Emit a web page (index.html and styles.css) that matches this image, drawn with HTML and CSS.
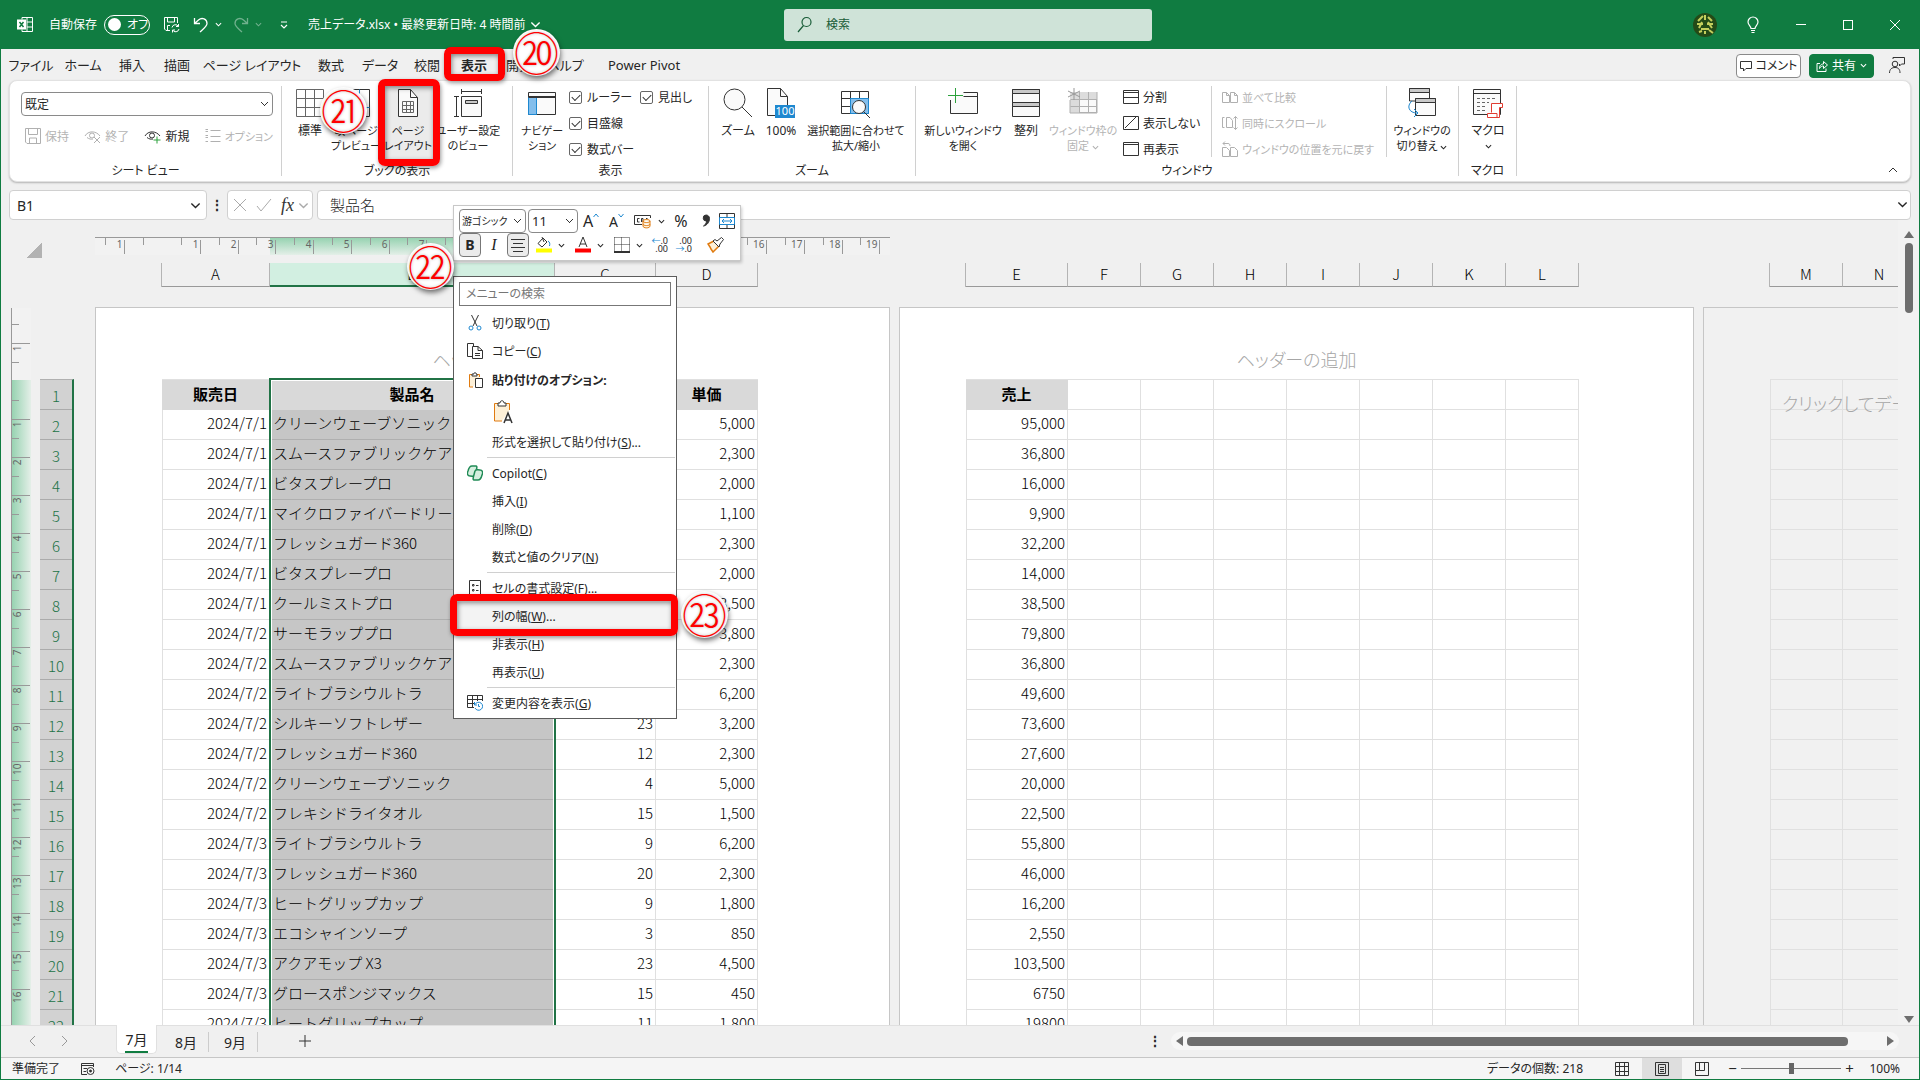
FILE: index.html
```html
<!DOCTYPE html>
<html lang="ja">
<head>
    <meta charset="UTF-8">
    <meta name="viewport" content="width=device-width, initial-scale=1.0">
    <title>売上データ.xlsx</title>
    <link rel="stylesheet" href="styles.css">
</head>
<body>
<div class="app">
    <header class="titlebar">
        <div class="title-left">
            <svg class="app-icon" width="17" height="17" viewBox="0 0 17 17"><path d="M5 3.500V1.500H15.500V15.500H5V13.500M10 1.500V15.500M10 6H15.500M10 11H15.500"/><rect x=".5" y="4" width="8" height="9" fill="#fff"/><path d="M2.500 6L6.500 11M6.500 6L2.500 11" stroke="#107c41" stroke-width="1.500"/></svg>
            <span class="autosave">自動保存</span>
            <button class="toggle"><i></i>オフ</button>
            <button class="tb-btn save"><svg width="17" height="17" viewBox="0 0 17 17"><path d="M7 14.500H3L1.500 13V1.500H14.500V7M4.500 1.500V6H11.500V1.500M4.500 14V9.500H7"/><path d="M9 11.500A3.500 3.500 0 0 1 15.500 10.500V8M15.500 10.500H13M16 13A3.500 3.500 0 0 1 9.500 14V16.500M9.500 14H12"/></svg></button>
            <button class="tb-btn undo"><svg width="16" height="16" viewBox="0 0 16 16" stroke-width="1.300"><path d="M1.500 1V6.500H7M1.500 6.500L5.500 3C9 0 14 2 14 6.500C14 9 12 10.500 7 15"/></svg><svg class="chev" viewBox="0 0 8 5"><path d="M1 1L4 4L7 1"/></svg></button>
            <button class="tb-btn redo"><svg width="16" height="16" viewBox="0 0 16 16" stroke-width="1.300"><path d="M14.500 1V6.500H9M14.500 6.500L10.500 3C7 0 2 2 2 6.500C2 9 4 10.500 9 15"/></svg><svg class="chev" viewBox="0 0 8 5"><path d="M1 1L4 4L7 1"/></svg></button>
            <button class="tb-btn qat"><svg width="8" height="8" viewBox="0 0 8 8" stroke-width="1.200"><path d="M1 1H7M1 4L4 7L7 4"/></svg></button>
            <span class="filename">売上データ.xlsx • 最終更新日時: 4 時間前</span>
            <svg class="chev wide" viewBox="0 0 8 5"><path d="M1 1L4 4L7 1"/></svg>
        </div>
        <label class="search">
            <svg width="16" height="18" viewBox="0 0 16 18" stroke-width="1.200"><circle cx="9.500" cy="6" r="4.500"/><path d="M6.500 9.500L1 16"/></svg>
            <input type="text" placeholder="検索" aria-label="検索">
        </label>
        <div class="title-right">
            <svg class="avatar" width="24" height="24" viewBox="0 0 24 24"><circle cx="12" cy="12" r="12" fill="#244a17" stroke="none"/><g stroke="#c4cf5d" stroke-width="2"><path d="M5 8L10 3M12 2V7M15 4L19 8M4 11H10M14 11H20M9 9L6 15M15 9L19 15M8 16H16M6 19L9 18M12 18V21M16 17L20 20"/></g></svg>
            <button class="tb-btn"><svg width="14" height="18" viewBox="0 0 14 18" stroke-width="1.200"><path d="M5 12.500C5 10 2 9 2 6A5 5 0 0 1 12 6C12 9 9 10 9 12.500ZM5 14.500H9M5.500 16.500H8.500"/></svg></button>
            <button class="tb-btn"><svg width="12" height="12" viewBox="0 0 12 12"><path d="M1 5.500H11"/></svg></button>
            <button class="tb-btn"><svg width="12" height="12" viewBox="0 0 12 12"><rect x="1.500" y="1.500" width="9" height="9"/></svg></button>
            <button class="tb-btn"><svg width="12" height="12" viewBox="0 0 12 12"><path d="M1 1L11 11M11 1L1 11"/></svg></button>
        </div>
    </header>

    <nav class="tabs">
        <a href="#" class="tab t50">ファイル</a>
        <a href="#" class="tab t54">ホーム</a>
        <a href="#" class="tab t44">挿入</a>
        <a href="#" class="tab">描画</a>
        <a href="#" class="tab t104">ページ レイアウト</a>
        <a href="#" class="tab t54">数式</a>
        <a href="#" class="tab t44">データ</a>
        <a href="#" class="tab t50">校閲</a>
        <a href="#" class="tab t44 active">表示</a>
        <a href="#" class="tab">開発</a>
        <a href="#" class="tab">ヘルプ</a>
        <a href="#" class="tab t112">Power Pivot</a>
        <div class="tab-actions">
            <button class="comment-btn"><svg width="12" height="12" viewBox="0 0 12 12"><path d="M.500 1.500H11.500V8.500H6L3.500 11V8.500H.500Z"/></svg>コメント</button>
            <button class="share-btn"><svg width="12" height="12" viewBox="0 0 12 12"><path d="M4 3.500H1V11.500H10V8.500M3.500 8.500C3.500 5 5.500 4 7.500 4V1.500L11.500 5L7.500 8.500V6C6 6 4.500 6.500 3.500 8.500Z"/></svg>共有<svg class="chev" viewBox="0 0 8 5"><path d="M1 1L4 4L7 1"/></svg></button>
            <svg class="person" width="17" height="17" viewBox="0 0 17 17"><circle cx="7" cy="7" r="2.800"/><path d="M1.500 16C1.500 12 4 10.500 7 10.500S12 12 12 16M5 2V.500H16.500V7H13.500L11.500 9V7"/></svg>
        </div>
    </nav>

    <section class="ribbon">
        <div class="group g-view">
            <div class="group-body">
                <select class="view-select" aria-label="シート ビュー"><option>既定</option></select>
                <div class="view-actions">
                    <button class="small off"><svg width="16" height="16" viewBox="0 0 16 16"><path d="M.500 .500H15.500V15.500H2L.500 14ZM3.500 .500V6.500H12.500V.500M4.500 15V10H11.500V15"/></svg>保持</button>
                    <button class="small off"><svg width="17" height="16" viewBox="0 0 17 16"><path d="M1 8C4 2.500 12 2.500 16 8M3 9.500C5 11 7 11.500 9 11"/><circle cx="8" cy="7.500" r="2.500"/><path d="M10 9L16 15M16 9L10 15"/></svg>終了</button>
                    <button class="small"><svg width="17" height="16" viewBox="0 0 17 16"><path d="M1 8C4 2.500 12 2.500 16 8M3 9.500C5 11 7 11.500 9 11"/><circle cx="8" cy="7.500" r="2.500"/><path class="green" d="M13 8.500V15.500M9.500 12H16.500"/></svg>新規</button>
                    <button class="small off options"><svg width="16" height="16" viewBox="0 0 16 16"><path d="M.500 1.500H3M.500 7.500H3M.500 13.500H3M5.500 2.500H15.500M5.500 8.500H15.500M5.500 13.500H15.500M.500 3.500H3M.500 9.500H3"/></svg>オプション</button>
                </div>
            </div>
            <div class="group-name">シート ビュー</div>
        </div>

        <div class="group g-book">
            <div class="group-body">
                <button class="big w46"><svg width="28" height="28" viewBox="0 0 28 28"><path class="soft" d="M.500 .500H27.500V27.500H.500ZM9.500 .500V27.500M18.500 .500V27.500M.500 9.500H27.500M.500 18.500H27.500"/></svg><span>標準</span></button>
                <button class="big w46 two"><svg width="28" height="28" viewBox="0 0 28 28"><path d="M.500 .500H27.500V27.500H.500Z"/><path class="blue" d="M17.500 .500V27.500M.500 18.500H27.500"/></svg><span>改ページ<br>プレビュー</span></button>
                <button class="big w58 two pressed"><svg width="28" height="28" viewBox="0 0 28 28"><path class="paper" d="M4.500 .500H16.500L23.500 8.500V27.500H4.500Z"/><path d="M16.500 .500V8.500H23.500"/><path class="soft" d="M8.500 12.500H19.500V23.500H8.500ZM12.500 12.500V23.500M16.500 12.500V23.500M8.500 16.500H19.500M8.500 20.500H19.500"/></svg><span>ページ<br>レイアウト</span></button>
                <button class="big w62 two"><svg width="28" height="28" viewBox="0 0 28 28"><path d="M7.500 2.500H27.500M7.500 0V5M27.500 0V5M2.500 7.500V27.500M0 7.500H5M0 27.500H5"/><path class="paper" d="M7.500 7.500H27.500V27.500H7.500Z"/><path class="grayfill" d="M11.500 11.500H23.500V14.500H11.500Z"/></svg><span>ユーザー設定<br>のビュー</span></button>
            </div>
            <div class="group-name">ブックの表示</div>
        </div>

        <div class="group g-show">
            <div class="group-body">
                <button class="big w48 two"><svg width="28" height="28" viewBox="0 0 28 28"><path class="paper" d="M.500 3.500H27.500V25.500H.500Z"/><path class="lightblue" d="M.500 8.500H8.500V25.500H.500Z"/><path d="M.500 8.500H27.500M.500 7.500H27.500"/></svg><span>ナビゲー<br>ション</span></button>
                <div class="checks">
                    <label><input type="checkbox" checked>ルーラー</label>
                    <label><input type="checkbox" checked>目盛線</label>
                    <label><input type="checkbox" checked>数式バー</label>
                </div>
                <div class="checks">
                    <label><input type="checkbox" checked>見出し</label>
                </div>
            </div>
            <div class="group-name">表示</div>
        </div>

        <div class="group g-zoom">
            <div class="group-body">
                <button class="big w48"><svg width="30" height="30" viewBox="0 0 30 30"><circle class="paper" cx="11.500" cy="11.500" r="10.500"/><path d="M19 19L29 29"/></svg><span>ズーム</span></button>
                <button class="big w38"><svg width="28" height="30" viewBox="0 0 28 30"><path class="paper" d="M.500 .500H13.500L20.500 8.500V27.500H.500Z"/><path d="M13.500 .500V8.500H20.500"/><rect x="8" y="17" width="20" height="13" fill="#1e88d0" stroke="none"/><text x="18" y="27" text-anchor="middle">100</text></svg><span>100%</span></button>
                <button class="big w112 two"><svg width="30" height="30" viewBox="0 0 30 30"><path d="M.500 3.500H27.500V25.500H.500ZM9.500 3.500V25.500M18.500 3.500V11M.500 10.500H27.500M.500 18.500H10"/><path class="lightblue" d="M9.500 10.500H27.500V25.500H9.500Z"/><circle class="paper" cx="18" cy="19" r="6.500"/><path d="M22.500 23.500L29 30"/></svg><span>選択範囲に合わせて<br>拡大/縮小</span></button>
            </div>
            <div class="group-name">ズーム</div>
        </div>

        <div class="group g-window">
            <div class="group-body">
                <button class="big w84 two"><svg width="30" height="30" viewBox="0 0 30 30"><path class="paper" d="M15.500 4.500H29.500V25.500H2.500V12"/><path d="M15.500 8.500H29.500"/><path class="green" d="M7.500 0V15M0 7.500H15"/></svg><span>新しいウィンドウ<br>を開く</span></button>
                <button class="big w42"><svg width="28" height="28" viewBox="0 0 28 28"><path class="paper" d="M.500 .500H27.500V27.500H.500Z"/><path class="grayfill" d="M.500 .500H27.500V4.500H.500ZM.500 13.500H27.500V17.500H.500Z"/></svg><span>整列</span></button>
                <button class="big w72 two off"><svg width="30" height="30" viewBox="0 0 30 30"><path class="dim" d="M2 4H29V25H2Z"/><path class="paper" d="M11.500 11.500H28.500V24.500H11.500Z"/><path d="M2.500 11.500H29M2.500 18.500H29M11.500 4V25M20.500 4V25M29 4V25H2V12"/><path class="star" d="M6 0V12M0 3L12 9M12 3L0 9"/></svg><span>ウィンドウ枠の<br>固定 <svg class="chev" viewBox="0 0 8 5"><path d="M1 1L4 4L7 1"/></svg></span></button>
                <div class="list list-a">
                    <button class="small"><svg width="16" height="14" viewBox="0 0 16 14"><path d="M.500 .500H15.500V13.500H.500ZM.500 2.500H15.500M.500 7.500H15.500"/></svg>分割</button>
                    <button class="small"><svg width="16" height="14" viewBox="0 0 16 14"><path d="M.500 .500H15.500V13.500H.500ZM2 12L13 1"/></svg>表示しない</button>
                    <button class="small"><svg width="16" height="14" viewBox="0 0 16 14"><path d="M.500 .500H15.500V13.500H.500ZM.500 2.500H15.500"/></svg>再表示</button>
                </div>
                <div class="list list-b">
                    <button class="small off"><svg width="16" height="14" viewBox="0 0 16 14"><path d="M.500 2.500H4.500L7.500 5.500V12.500H.500ZM4.500 2.500V5.500H7.500M8.500 2.500H12.500L15.500 5.500V12.500H8.500ZM12.500 2.500V5.500H15.500"/></svg>並べて比較</button>
                    <button class="small off"><svg width="16" height="14" viewBox="0 0 16 14"><path d="M2.500 1.500H.500V11.500H2.500M4.500 1.500H8L10.500 4.500V11.500H4.500ZM13.500 .500V13.500M11.500 2.500L13.500 .500L15.500 2.500M11.500 11.500L13.500 13.500L15.500 11.500"/></svg>同時にスクロール</button>
                    <button class="small off"><svg width="16" height="16" viewBox="0 0 16 16"><path d="M.500 6.500H4.500L7.500 9.500V15.500H.500ZM8.500 6.500H12.500L15.500 9.500V15.500H8.500ZM3 .500L1 2.500L3 4.500M1 2.500H6C7.500 2.500 8 3.500 8 5"/></svg>ウィンドウの位置を元に戻す</button>
                </div>
                <button class="big w70 two"><svg width="30" height="30" viewBox="0 0 30 30"><path class="paper" d="M2.500 .500H22.500V13H2.500Z"/><path class="grayfill" d="M2.500 .500H22.500V4.500H2.500Z"/><path class="paper" d="M8.500 10.500H28.500V27.500H8.500Z"/><path class="grayfill" d="M8.500 10.500H28.500V14.500H8.500Z"/><path class="blue" d="M5 13C-1 18 2 25 10 25M7 21L11 25L7 29"/></svg><span>ウィンドウの<br>切り替え <svg class="chev" viewBox="0 0 8 5"><path d="M1 1L4 4L7 1"/></svg></span></button>
            </div>
            <div class="group-name">ウィンドウ</div>
        </div>

        <div class="group g-macro">
            <div class="group-body">
                <button class="big w58"><svg width="30" height="30" viewBox="0 0 30 30"><path class="paper" d="M.500 1.500H27.500V26.500H.500Z"/><path d="M.500 5.500H27.500"/><path class="soft" stroke-dasharray="3 2" d="M4 10.500H24M4 14.500H16M4 18.500H14M4 22.500H12"/><path class="red" d="M18.500 24.500V15.500H29.500V19.500H26.500V29.500H14.500V25.500H24V29"/></svg><span>マクロ<br><svg class="chev" viewBox="0 0 8 5"><path d="M1 1L4 4L7 1"/></svg></span></button>
            </div>
            <div class="group-name">マクロ</div>
        </div>
        <button class="collapse" aria-label="リボンを折りたたむ"><svg width="10" height="6" viewBox="0 0 10 6"><path d="M1 5L5 1L9 5"/></svg></button>
    </section>

    <section class="formula-row">
        <label class="namebox"><input type="text" value="B1" aria-label="名前"><svg class="chev wide" viewBox="0 0 8 5"><path d="M1 1L4 4L7 1"/></svg></label>
        <span class="grip">⋮</span>
        <div class="fx-box">
            <svg width="14" height="14" viewBox="0 0 14 14"><path d="M1 1L13 13M13 1L1 13"/></svg>
            <svg width="16" height="14" viewBox="0 0 16 14"><path d="M1 8L5 13L15 1"/></svg>
            <i class="fx">fx</i>
            <svg class="chev wide" viewBox="0 0 8 5"><path d="M1 1L4 4L7 1"/></svg>
        </div>
        <label class="formula"><input type="text" value="製品名" aria-label="数式バー"><svg class="chev wide" viewBox="0 0 8 5"><path d="M1 1L4 4L7 1"/></svg></label>
    </section>

    <main class="sheet">
        <div class="sheet-left">
            <div class="corner"><i></i></div>
            <div class="left-rulers">
                <svg class="vruler" id="vruler" width="20" height="720"></svg>
                <div class="rowheads" id="rowheads"></div>
            </div>
        </div>
        <div class="pages">
            <div class="page-col">
                <svg class="hruler" id="hruler" width="795" height="20"></svg>
                <div class="colheads"><b class="cA">A</b><b class="cB">B</b><b class="cC">C</b><b class="cD">D</b></div>
                <div class="page">
                    <div class="page-header">ヘッダーの追加</div>
                    <div class="grid">
                        <table id="table1"><colgroup><col class="cA"><col class="cB"><col class="cC"><col class="cD"></colgroup></table>
                        <div class="selection"></div>
                    </div>
                </div>
            </div>
            <div class="page-col">
                <div class="hruler"></div>
                <div class="colheads"><b class="cE">E</b><b>F</b><b>G</b><b>H</b><b>I</b><b>J</b><b>K</b><b>L</b></div>
                <div class="page">
                    <div class="page-header">ヘッダーの追加</div>
                    <div class="grid">
                        <table id="table2"><colgroup><col class="cE"><col><col><col><col><col><col><col></colgroup></table>
                    </div>
                </div>
            </div>
            <div class="page-col">
                <div class="hruler"></div>
                <div class="colheads"><b>M</b><b>N</b></div>
                <div class="page blank">
                    <div class="page-header"></div>
                    <div class="grid">
                        <table id="table3"><colgroup><col><col></colgroup></table>
                        <div class="hint">クリックしてデータを追加</div>
                    </div>
                </div>
            </div>
        </div>
        <div class="vscroll"><i class="arrow up"></i><i class="thumb"></i><i class="arrow down"></i></div>
    </main>

    <section class="sheet-tabs">
        <button class="nav-arrow"><svg width="8" height="12" viewBox="0 0 8 12"><path d="M6 1L1 6L6 11"/></svg></button>
        <button class="nav-arrow"><svg width="8" height="12" viewBox="0 0 8 12"><path d="M1 1L6 6L1 11"/></svg></button>
        <button class="sheet-tab current"><span>7月</span></button>
        <button class="sheet-tab">8月</button>
        <button class="sheet-tab">9月</button>
        <button class="add-tab"><svg width="12" height="12" viewBox="0 0 12 12"><path d="M6 0V12M0 6H12"/></svg></button>
        <span class="grip">⋮</span>
        <div class="hscroll"><i class="arrow left"></i><i class="thumb"></i><i class="arrow right"></i></div>
    </section>

    <footer class="status">
        <span>準備完了</span>
        <svg width="15" height="14" viewBox="0 0 15 14"><path d="M7 12.500H1.500V1.500H13.500V5M1.500 3.500H13.500M3.500 6.500H7M3.500 9.500H6"/><circle cx="10.500" cy="9" r="3.500"/><circle cx="10.500" cy="9" r="1" fill="#222"/></svg>
        <span>ページ: 1/14</span>
        <span class="count">データの個数: 218</span>
        <button class="mode"><svg width="14" height="14" viewBox="0 0 14 14"><path d="M.500 .500H13.500V13.500H.500ZM4.500 .500V13.500M9.500 .500V13.500M.500 4.500H13.500M.500 9.500H13.500"/></svg></button>
        <button class="mode on"><svg width="14" height="14" viewBox="0 0 14 14"><path d="M.500 .500H13.500V13.500H.500ZM3.500 2.500H10.500V11.500H3.500ZM5 5.500H9M5 7.500H9M5 9.500H9"/></svg></button>
        <button class="mode"><svg width="14" height="14" viewBox="0 0 14 14"><path d="M.500 .500H13.500V13.500H.500ZM4.500 .500V8.500H9.500V.500M.500 8.500H4.500"/></svg></button>
        <div class="zoom"><span>−</span><input type="range" min="0" max="100" value="50" aria-label="ズーム"><span>+</span></div>
        <span class="percent">100%</span>
    </footer>

    <!-- floating format toolbar -->
    <div class="mini">
        <div class="mini-row">
            <select class="font-name" aria-label="フォント"><option>游ゴシック</option></select>
            <select class="font-size" aria-label="フォント サイズ"><option>11</option></select>
            <button class="m-a">A<svg width="6" height="12" viewBox="0 0 6 12"><path class="blue" d="M.500 4L3 1L5.500 4"/></svg></button>
            <button class="m-a sm">A<svg width="6" height="12" viewBox="0 0 6 12"><path class="blue" d="M.500 1L3 4L5.500 1"/></svg></button>
            <button class="m-btn"><svg width="18" height="16" viewBox="0 0 18 16"><path d="M8 11.500H.500V2.500H16.500V5M5.500 5.500H3.500V9H5.500M9 9V5.500H7.500V9M12 5.500H13.500"/><path class="orange" d="M9 8C9 6 16 6 16 8V13C16 15.500 9 15.500 9 13ZM9 8C9 10 16 10 16 8M9 11C9 13 16 13 16 11"/></svg><svg class="chev" viewBox="0 0 8 5"><path d="M1 1L4 4L7 1"/></svg></button>
            <button class="m-pct">%</button>
            <button class="m-comma"><svg width="8" height="14" viewBox="0 0 8 14"><path d="M4 1A3 3 0 1 0 4.500 7C4.500 9.500 3 11 1.500 12C5 11.500 7.500 8 7.500 4.500C7.500 2.500 6 1 4 1Z" fill="#333"/></svg></button>
            <button class="m-merge"><svg width="16" height="16" viewBox="0 0 16 16"><path d="M.500 .500H15.500V15.500H.500ZM8 .500V4M8 12V15.500"/><path class="blue" d="M.500 4.500H15.500V11.500H.500ZM3 8H13M5 6L3 8L5 10M11 6L13 8L11 10"/></svg></button>
        </div>
        <div class="mini-row">
            <button class="m-key on"><b>B</b></button>
            <button class="m-key"><i>I</i></button>
            <button class="m-key on"><svg width="14" height="14" viewBox="0 0 14 14"><path d="M0 1.500H14M2 5.500H12M0 9.500H14M2 13.500H12"/></svg></button>
            <button class="m-btn"><svg width="16" height="16" viewBox="0 0 16 16"><path d="M7 1L2 6.500L6 10L11 5ZM6 0L8 5"/><path class="blue" d="M12 4C14 5 14 7 13.500 9"/><path d="M0 13.500H16" stroke="#ff0" stroke-width="4"/></svg><svg class="chev" viewBox="0 0 8 5"><path d="M1 1L4 4L7 1"/></svg></button>
            <button class="m-btn"><svg width="16" height="16" viewBox="0 0 16 16"><path d="M4 10L8 0L12 10M5 7H11"/><path d="M0 13.500H16" stroke="#f00" stroke-width="4"/></svg><svg class="chev" viewBox="0 0 8 5"><path d="M1 1L4 4L7 1"/></svg></button>
            <button class="m-btn"><svg width="16" height="16" viewBox="0 0 16 16"><path stroke-dasharray="1 1" d="M.500 .500H15.500V14M.500 .500V14M7.500 .500V14M.500 7.500H15.500"/><path d="M0 15H16" stroke-width="2"/></svg><svg class="chev" viewBox="0 0 8 5"><path d="M1 1L4 4L7 1"/></svg></button>
            <button class="m-dec"><span><em>←</em>.0</span><span>.00</span></button>
            <button class="m-dec"><span>.00</span><span><em>→</em>.0</span></button>
            <button class="m-brush"><svg width="17" height="16" viewBox="0 0 17 16"><path class="orange" stroke-width="1.500" d="M1 7L7 4L12 9L6 15L4 12L3 10Z"/><path fill="#fff" d="M6 4L12 10L13 7L16.500 2.500L14.500 .500L10 4L8 2.500Z"/></svg></button>
        </div>
    </div>

    <!-- context menu -->
    <div class="menu">
        <input class="menu-search" type="text" placeholder="メニューの検索" aria-label="メニューの検索">
        <button class="item"><svg width="16" height="16" viewBox="0 0 16 16"><path d="M4.500 0L10 11M11.500 0L6 11"/><g class="blue"><circle cx="4" cy="13" r="2"/><circle cx="12" cy="13" r="2"/></g></svg><span>切り取り(<u>T</u>)</span></button>
        <button class="item"><svg width="16" height="16" viewBox="0 0 16 16"><path d="M5 13.500H.500V.500H6.500V3M5.500 3.500H11L15.500 7.500V15.500H5.500ZM11 3.500V7.500H15.500M8 10.500H13M8 12.500H13"/></svg><span>コピー(<u>C</u>)</span></button>
        <div class="item label"><svg width="16" height="16" viewBox="0 0 16 16"><path class="orange" d="M6 15H2.500V2.500H12.500V5"/><path fill="#fff" d="M5 4V2H7C7 0 9 0 9 2H10V4ZM8.500 6.500H15.500V15.500H8.500Z"/></svg><span>貼り付けのオプション:</span></div>
        <button class="item paste-a"><svg width="22" height="24" viewBox="0 0 22 24"><path class="orange" d="M10 21H2.500V3.500H17.500V10"/><path fill="#fff" d="M6 6V3H8C8 0 12 0 12 3H14V6Z"/><path stroke-width="1.500" d="M12 23L16 13L20 23M13 20H19"/></svg></button>
        <button class="item"><i></i><span>形式を選択して貼り付け(<u>S</u>)...</span></button>
        <hr>
        <button class="item"><svg width="16" height="16" viewBox="0 0 16 16"><g class="cop"><path d="M5 1H9C11 1 9 6 8 10C7 12 6 11 3 11C0 11 0 8 1 6C2 2 3 1 5 1Z"/><path d="M11 15H7C5 15 7 10 8 6C9 4 10 5 13 5C16 5 16 8 15 10C14 14 13 15 11 15Z"/></g></svg><span>Copilot(<u>C</u>)</span></button>
        <button class="item"><i></i><span>挿入(<u>I</u>)</span></button>
        <button class="item"><i></i><span>削除(<u>D</u>)</span></button>
        <button class="item"><i></i><span>数式と値のクリア(<u>N</u>)</span></button>
        <hr>
        <button class="item"><svg width="16" height="16" viewBox="0 0 16 16"><path d="M2.500 .500H13.500V15.500H2.500ZM5.500 4.500H7V6H5.500ZM5.500 9.500H7V11H5.500ZM9 5.500H11.500M9 10.500H11.500"/></svg><span>セルの書式設定(<u>F</u>)...</span></button>
        <button class="item hover"><i></i><span>列の幅(<u>W</u>)...</span></button>
        <button class="item"><i></i><span>非表示(<u>H</u>)</span></button>
        <button class="item"><i></i><span>再表示(<u>U</u>)</span></button>
        <hr>
        <button class="item"><svg width="16" height="16" viewBox="0 0 16 16"><path d="M7 12.500H.500V.500H15.500V6M.500 4.500H15.500M5.500 .500V12.500M10.500 .500V6M.500 8.500H7"/><path class="blue" d="M7.500 7V10H10M8 9.500A4 4 0 1 1 8 13M11.500 9V11.500H13"/></svg><span>変更内容を表示(<u>G</u>)</span></button>
    </div>

    <!-- step callouts -->
    <div class="frame f20"></div>
    <div class="frame f21"></div>
    <div class="frame f23"></div>
    <span class="step s20">⑳</span>
    <span class="step s21">㉑</span>
    <span class="step s22">㉒</span>
    <span class="step s23">㉓</span>
</div>
<script src="script.js"></script>
</body>
</html>
```
FILE: styles.css
```css
* {
    box-sizing: border-box;
}

body {
    margin: 0;
    font-family: "Noto Sans", "Noto Sans CJK JP", sans-serif;
    font-size: 12px;
    line-height: 15px;
    font-feature-settings: "palt";
    color: #262626;
}

button, input, select {
    font: inherit;
    font-feature-settings: inherit;
    color: inherit;
    background: none;
    border: 0;
    padding: 0;
    margin: 0;
    outline: none;
}

svg {
    fill: none;
    stroke: #333;
    flex: none;
}

a {
    color: inherit;
    text-decoration: none;
}

.app {
    position: relative;
    display: flex;
    flex-direction: column;
    height: 100vh;
    overflow: hidden;
    background: #f0f0f0;
    border: 1px solid #107c41;
    border-top: 0;
}

.chev {
    width: 7px;
    height: 5px;
    stroke: currentColor;
    stroke-width: 1.2;
}

.chev.wide {
    width: 11px;
    height: 7px;
    stroke-width: 1;
}

/* Title bar */
.titlebar {
    display: flex;
    align-items: center;
    flex: none;
    height: 49px;
    padding: 0 18px 0 16px;
    background: #107c41;
    color: #fff;
}

.titlebar svg, .share-btn svg {
    stroke: #fff;
}

.titlebar .search svg {
    stroke: #185c37;
}

.title-left, .title-right {
    display: flex;
    align-items: center;
    flex: 1;
    white-space: nowrap;
}

.title-left {
    margin-right: 18px;
}

.title-right {
    justify-content: flex-end;
    gap: 35px;
}

.avatar {
    margin-right: -6px;
}

.autosave {
    margin: 0 7px 0 15px;
}

.toggle {
    display: flex;
    align-items: center;
    gap: 6px;
    flex: none;
    width: 46px;
    height: 20px;
    padding: 0 3px;
    border: 1px solid #fff;
    border-radius: 10px;
}

.toggle i {
    flex: none;
    width: 13px;
    height: 13px;
    border-radius: 50%;
    background: #fff;
}

.tb-btn {
    display: flex;
    align-items: center;
    gap: 6px;
}

.save {
    margin: 0 13px;
}

.redo {
    margin: 0 18px 0 11px;
    opacity: 0.4;
}

.filename {
    margin: 0 5px 0 20px;
}

.search {
    display: flex;
    align-items: center;
    gap: 13px;
    width: 368px;
    height: 32px;
    padding: 0 13px;
    border-radius: 3px;
    background: #cfe3d8;
}

.search input::placeholder {
    color: #185c37;
    opacity: 1;
}

/* Ribbon tabs */
.tabs {
    display: flex;
    align-items: center;
    flex: none;
    height: 31px;
    padding: 2px 14px 0 5px;
    font-size: 13px;
}

.tab {
    width: 46px;
    text-align: center;
    white-space: nowrap;
}

.t44 { width: 44px; }
.t50 { width: 50px; }
.t54 { width: 54px; }
.t104 { width: 104px; }
.t112 { width: 112px; }

.tab.active {
    font-weight: bold;
}

.tab-actions {
    display: flex;
    align-items: center;
    gap: 8px;
    margin-left: auto;
    font-size: 12px;
}

.comment-btn, .share-btn {
    display: flex;
    align-items: center;
    justify-content: center;
    gap: 4px;
    width: 65px;
    height: 24px;
    border: 1px solid #8a8a8a;
    border-radius: 4px;
    background: #fff;
    white-space: nowrap;
}

.share-btn {
    border-color: #107c41;
    background: #107c41;
    color: #fff;
}

.person {
    margin-left: 6px;
}

/* Ribbon */
.ribbon {
    display: flex;
    flex: none;
    height: 102px;
    margin: 0 8px;
    border: 1px solid #e2e2e2;
    border-radius: 8px;
    background: #fff;
    box-shadow: 0 1px 2px rgba(0, 0, 0, 0.25);
}

.group {
    display: flex;
    flex-direction: column;
    flex: none;
    height: 90px;
    margin-top: 5px;
    border-right: 1px solid #d0d0d0;
}

.g-view { width: 272px; }
.g-book { width: 231px; }
.g-show { width: 196px; }
.g-zoom { width: 207px; }
.g-window { width: 543px; }
.g-macro { width: 58px; }

.group-body {
    display: flex;
    flex: 1;
    padding-left: 5px;
}

.group-name {
    height: 14px;
    line-height: 14px;
    margin-bottom: -2px;
    text-align: center;
}

.g-view .group-body {
    flex-direction: column;
    padding: 6px 8px 0 11px;
}

/* drop-downs share one arrow drawn from two gradients */
.view-select, .font-name, .font-size {
    appearance: none;
    height: 24px;
    padding: 0 6px 0 3px;
    border: 1px solid #8a8a8a;
    border-radius: 4px;
    background-color: #fff;
    background-image: linear-gradient(45deg, transparent 45%, #333 45%, #333 60%, transparent 60%), linear-gradient(-45deg, transparent 45%, #333 45%, #333 60%, transparent 60%);
    background-size: 4px 4px;
    background-position: right 7px center, right 4px center;
    background-repeat: no-repeat;
}

.view-actions {
    display: flex;
    justify-content: space-between;
    margin-top: 12px;
    padding: 0 0 0 4px;
}

.small {
    display: flex;
    align-items: center;
    gap: 4px;
    white-space: nowrap;
}

.options {
    font-size: 11px;
}

.off {
    color: #b4b4b4;
}

.off svg {
    stroke: #b0b0b0;
}

.big {
    display: flex;
    flex-direction: column;
    align-items: center;
    flex: none;
    padding-top: 2px;
    white-space: nowrap;
    text-align: center;
}

.big.two {
    font-size: 11px;
}

.big > svg {
    margin-bottom: 5px;
    height: 30px;
}

.big .chev {
    vertical-align: middle;
}

.w38 { width: 38px; }
.w42 { width: 42px; }
.w46 { width: 46px; }
.w48 { width: 48px; }
.w58 { width: 58px; }
.w62 { width: 62px; }
.w70 { width: 70px; }
.w72 { width: 72px; }
.w84 { width: 84px; }
.w112 { width: 112px; }

.g-macro .group-body {
    padding-left: 0;
}

.pressed {
    background: #ebebeb;
}

.paper { fill: #fafafa; }
.soft { stroke: #666; }
.grayfill { fill: #c8c8c8; }
.dim { fill: #dcdcdc; stroke: none; }
.blue { stroke: #1e88d0; }
.lightblue { fill: #83beec; stroke: #1e88d0; }
.green { stroke: #2ca13c; }
.red { stroke: #e03c31; fill: #fff; }
.orange { stroke: #e07b10; fill: #fdf0d8; }
.cop { stroke: #1f8a55; stroke-width: 1.5; fill: #d5efdf; }
.star { stroke: #999; }

.big text {
    font-size: 11px;
    fill: #fff;
    stroke: none;
}

.checks {
    display: flex;
    flex-direction: column;
    gap: 10px;
    width: 75px;
    padding-top: 3px;
}

.checks label {
    display: flex;
    align-items: center;
    gap: 5px;
    height: 16px;
    padding-left: 3px;
    white-space: nowrap;
}

.checks input {
    appearance: none;
    width: 13px;
    height: 13px;
    border: 1px solid #666;
    border-radius: 2px;
}

.checks input::after {
    content: "";
    display: block;
    width: 7px;
    height: 4px;
    margin: 2px;
    border-left: 1px solid #333;
    border-bottom: 1px solid #333;
    transform: rotate(-45deg);
}

.list {
    display: flex;
    flex-direction: column;
    gap: 10px;
    padding-top: 3px;
}

.list .small {
    height: 16px;
}

.list-a {
    width: 93px;
    height: 71px;
    padding-left: 4px;
    border-right: 1px solid #d0d0d0;
}

.list-b {
    width: 175px;
    height: 71px;
    padding-left: 10px;
    border-right: 1px solid #d0d0d0;
    font-size: 11px;
}

.collapse {
    align-self: flex-end;
    margin: 0 12px 8px auto;
    line-height: 0;
}

/* Formula bar */
.formula-row {
    display: flex;
    flex: none;
    height: 31px;
    margin: 7px 8px 0;
    padding-top: 1px;
    font-size: 14px;
}

.namebox, .fx-box, .formula {
    display: flex;
    align-items: center;
    height: 30px;
    border: 1px solid #d0d0d0;
    border-radius: 4px;
    background: #fff;
}

.namebox {
    justify-content: space-between;
    width: 198px;
    padding: 0 5px 0 7px;
}

.namebox input {
    width: 120px;
}

.grip {
    width: 20px;
    text-align: center;
    line-height: 30px;
    font-weight: bold;
}

.fx-box {
    gap: 9px;
    width: 86px;
    padding-left: 5px;
    margin-right: 4px;
    color: #777;
}

.fx-box svg {
    stroke: #aaa;
}

.fx-box .chev {
    margin-left: -5px;
}

.fx {
    font-family: "Liberation Serif", serif;
    font-size: 18px;
    color: #333;
}

.formula {
    flex: 1;
    padding: 0 2px 2px 12px;
}

.formula input {
    flex: 1;
    font-family: "Noto Sans CJK JP", sans-serif;
    font-feature-settings: normal;
    font-size: 15px;
    font-weight: 300;
}

/* Sheet */
.sheet {
    display: flex;
    flex: 1;
    min-height: 0;
    overflow: hidden;
    font-family: "Noto Sans CJK JP", sans-serif;
    font-feature-settings: normal;
    font-size: 15px;
}

.sheet-left {
    flex: none;
    width: 94px;
}

.corner {
    height: 88px;
    padding: 22px 0 0 26px;
}

.corner i {
    display: block;
    width: 15px;
    height: 16px;
    background: linear-gradient(135deg, transparent 50%, #b2b2b2 50%);
}

.left-rulers {
    display: flex;
    padding-left: 10px;
}

.rowheads {
    width: 34px;
    margin: 71px 0 0 9px;
    border-top: 1px solid #b0b0b0;
    border-right: 2px solid #217346;
    background: #d2d2d2;
    color: #217346;
    font-weight: 300;
}

.rowheads div {
    height: 30px;
    padding-top: 1px;
    line-height: 29px;
    text-align: center;
    border-bottom: 1px solid #ababab;
}

.vruler, .hruler {
    stroke: none;
}

.tick {
    stroke: #999;
}

.num {
    fill: #666;
    stroke: none;
    font-family: "Noto Sans", sans-serif;
    font-size: 10px;
}

.pages {
    display: flex;
    flex: 1;
    gap: 9px;
    min-width: 0;
    overflow: hidden;
}

.page-col {
    flex: none;
    width: 795px;
}

.hruler {
    display: block;
    height: 20px;
    margin: 17px 0 6px;
}

.colheads {
    display: flex;
    height: 24px;
    margin: 0 0 20px 67px;
}

.colheads b {
    width: 73px;
    font-weight: 300;
    line-height: 22px;
    text-align: center;
    color: #000;
    border-right: 1px solid #b4b4b4;
    border-bottom: 1px solid #999;
}

.colheads b:first-child {
    box-shadow: -1px 0 0 #b4b4b4;
}

.colheads .cA, col.cA { width: 108px; }
.colheads .cB, col.cB { width: 285px; }
.colheads .cC, col.cC { width: 101px; }
.colheads .cD, col.cD { width: 102px; }
.colheads .cE, col.cE { width: 102px; }

.colheads .cB {
    background: #d2efe1;
    border-bottom: 2px solid #217346;
}

.page {
    height: 1100px;
    border: 1px solid #c6c6c6;
    background: #fff;
}

.page.blank {
    background: #f1f1f1;
}

.page-header {
    height: 71px;
    padding-top: 37px;
    line-height: 28px;
    font-size: 18px;
    font-feature-settings: "palt";
    font-weight: 300;
    text-align: center;
    color: #a6a6a6;
}

.grid {
    position: relative;
    width: max-content;
    margin-left: 66px;
}

table {
    table-layout: fixed;
    width: 0;
    border-spacing: 0;
    border-top: 1px solid #e0e0e0;
}

col {
    width: 73px;
}

th, td {
    height: 30px;
    padding: 0 2px 3px;
    line-height: 20px;
    white-space: nowrap;
    overflow: hidden;
    text-align: right;
    border-right: 1px solid #e0e0e0;
    border-bottom: 1px solid #e0e0e0;
    color: #000;
    font-weight: 300;
}

th {
    padding-bottom: 2px;
    font-weight: bold;
    text-align: center;
    background: #d9d9d9;
    border-color: #d9d9d9;
}

td:first-child {
    box-shadow: inset 1px 0 0 #e0e0e0;
}

td.name {
    text-align: left;
    padding-left: 3px;
    background: #c6c6c6;
    border-color: #afafaf;
}

.selection {
    position: absolute;
    top: -1px;
    bottom: 0;
    left: 107px;
    width: 287px;
    border: 2px solid #217346;
    box-shadow: inset 0 0 0 1px #fff;
}

.hint {
    position: absolute;
    top: 10px;
    left: 12px;
    line-height: 28px;
    font-size: 18px;
    font-weight: 300;
    font-feature-settings: "palt";
    white-space: nowrap;
    color: #a6a6a6;
}

.vscroll {
    display: flex;
    flex-direction: column;
    align-items: center;
    width: 21px;
    padding: 11px 0 2px;
    background: #f2f2f2;
}

.vscroll .thumb {
    width: 8px;
    height: 70px;
    margin-top: 5px;
    border-radius: 4px;
    background: #6e6e6e;
}

.arrow {
    border: 5px solid transparent;
}

.arrow.up {
    border-bottom: 7px solid #6e6e6e;
    border-top: 0;
}

.arrow.down {
    margin-top: auto;
    border-top: 7px solid #6e6e6e;
    border-bottom: 0;
}

.arrow.left {
    border-right: 7px solid #6e6e6e;
    border-left: 0;
}

.arrow.right {
    margin-left: auto;
    border-left: 7px solid #6e6e6e;
    border-right: 0;
}

/* Sheet tabs */
.sheet-tabs {
    display: flex;
    flex: none;
    height: 32px;
    padding: 0 20px 0 16px;
    border-top: 1px solid #e0e0e0;
    font-size: 14px;
}

.nav-arrow {
    width: 32px;
}

.nav-arrow svg {
    stroke: #999;
}

.sheet-tab {
    width: 49px;
    height: 20px;
    margin-top: 6px;
    padding-left: 4px;
    border-right: 1px solid #ccc;
}

.sheet-tab.current {
    width: 41px;
    height: 29px;
    margin: -1px 3px 0 35px;
    padding: 0;
    border: 1px solid #e0e0e0;
    border-top: 0;
    border-radius: 0 0 5px 5px;
    background: #fff;
}

.current span {
    padding-bottom: 2px;
    border-bottom: 2px solid #107c41;
}

.add-tab {
    width: 94px;
    margin-right: auto;
}

.hscroll {
    display: flex;
    align-items: center;
    flex: 0 1 728px;
    height: 18px;
    margin: 6px 0 0 6px;
    padding: 0 5px;
    border-radius: 9px;
    background: #f6f6f6;
}

.hscroll .thumb {
    width: 92%;
    height: 9px;
    margin-left: 4px;
    border-radius: 4px;
    background: #6e6e6e;
}

/* Status bar */
.status {
    display: flex;
    align-items: center;
    flex: none;
    height: 22px;
    padding: 0 19px 0 11px;
    border-top: 1px solid #c6c6c6;
    background: #f5f5f5;
}

.status > svg {
    margin: 0 20px;
}

.count {
    margin: 0 19px 0 auto;
}

.mode {
    width: 40px;
    height: 21px;
    line-height: 0;
}

.mode.on {
    background: #dedede;
}

.zoom {
    display: flex;
    align-items: center;
    gap: 4px;
    margin: 0 12px 0 6px;
}

.zoom span {
    width: 9px;
    font-size: 15px;
    text-align: center;
}

.zoom input {
    appearance: none;
    width: 100px;
    height: 11px;
    background: linear-gradient(#777, #777) center / 100% 1px no-repeat;
}

.zoom input::-webkit-slider-thumb {
    appearance: none;
    width: 5px;
    height: 11px;
    background: #666;
}

.percent {
    width: 34px;
    text-align: right;
}

/* Mini toolbar */
.mini {
    position: absolute;
    left: 452px;
    top: 205px;
    width: 288px;
    padding: 3px 5px;
    border: 1px solid #c8c8c8;
    background: #fff;
    box-shadow: 1px 2px 3px rgba(0, 0, 0, 0.2);
}

.mini-row {
    display: flex;
    align-items: center;
    height: 24px;
}

.font-name {
    width: 67px;
    margin-right: 2px;
    padding: 0 0 0 2px;
    font-size: 10px;
}

.font-size {
    width: 50px;
    margin-right: 5px;
    font-size: 13px;
}

.m-a {
    display: flex;
    align-items: center;
    width: 26px;
    font-size: 16px;
}

.m-a svg {
    margin-bottom: 4px;
}

.m-a.sm {
    width: 21px;
    font-size: 14px;
}

.m-btn {
    display: flex;
    align-items: center;
    justify-content: center;
    gap: 6px;
    width: 39px;
}

.m-pct {
    width: 24px;
    font-size: 16px;
}

.m-comma {
    width: 26px;
    line-height: 0;
}

.m-merge, .m-brush {
    flex: 1;
    line-height: 0;
}

.m-key {
    width: 22px;
    height: 24px;
    margin-right: 2px;
    border: 1px solid transparent;
    border-radius: 4px;
    font-size: 14px;
    line-height: 0;
}

.m-key i {
    font-family: "Liberation Serif", serif;
    font-size: 16px;
}

.m-key.on {
    border-color: #777;
    background: #ebebeb;
}

.m-dec {
    display: flex;
    flex-direction: column;
    align-items: flex-end;
    width: 24px;
    padding-right: 4px;
    font-size: 9px;
    line-height: 8px;
}

.m-dec em {
    font-style: normal;
    color: #1e88d0;
}

/* Context menu */
.menu {
    position: absolute;
    left: 452px;
    top: 276px;
    display: flex;
    flex-direction: column;
    width: 224px;
    padding: 5px 1px 1px;
    border: 1px solid #5c5c5c;
    background: #fff;
}

.menu-search {
    height: 24px;
    margin: 0 4px 3px;
    padding: 0 6px 2px;
    border: 1px solid #777;
}

.menu-search::placeholder {
    color: #767676;
    opacity: 1;
}

.item {
    display: flex;
    align-items: center;
    gap: 9px;
    flex: none;
    height: 28px;
    padding-left: 12px;
    text-align: left;
    white-space: nowrap;
}

.item > i {
    width: 16px;
}

.item.label {
    height: 30px;
    font-weight: bold;
}

.item.paste-a {
    height: 33px;
    padding-left: 37px;
}

.item.hover {
    background: #f3f3f3;
}

.menu hr {
    flex: none;
    width: 188px;
    height: 1px;
    margin: 1px 0 1px auto;
    border: 0;
    background: #d0d0d0;
}

/* Callouts */
.frame {
    position: absolute;
    border: 7px solid #f00;
    border-radius: 7px;
    box-shadow: 1px 2px 4px rgba(0, 0, 0, 0.4), inset 1px 2px 5px rgba(0, 0, 0, 0.45);
}

.f20 { left: 443px; top: 47px; width: 61px; height: 34px; }
.f21 { left: 377px; top: 79px; width: 62px; height: 87px; }
.f23 { left: 449px; top: 594px; width: 228px; height: 42px; }

.step {
    position: absolute;
    width: 47px;
    height: 47px;
    border-radius: 50%;
    background: #fff;
    box-shadow: 1px 3px 5px rgba(0, 0, 0, 0.5);
    color: #f00;
    font-family: "Noto Sans CJK JP", sans-serif;
    font-feature-settings: normal;
    font-size: 45px;
    font-weight: 300;
    line-height: 45px;
    text-align: center;
    text-shadow: 0 0 3px rgba(0, 0, 0, 0.3);
}

.s20 { left: 512px; top: 29px; }
.s21 { left: 319px; top: 87px; }
.s22 { left: 406px; top: 243px; }
.s23 { left: 680px; top: 591px; }
```
FILE: script.js
```js
const rows = [
    ["2024/7/1", "クリーンウェーブソニック", "19", "5,000", "95,000"],
    ["2024/7/1", "スムースファブリックケア", "16", "2,300", "36,800"],
    ["2024/7/1", "ビタスプレープロ", "8", "2,000", "16,000"],
    ["2024/7/1", "マイクロファイバードリーム", "9", "1,100", "9,900"],
    ["2024/7/1", "フレッシュガード360", "14", "2,300", "32,200"],
    ["2024/7/1", "ビタスプレープロ", "7", "2,000", "14,000"],
    ["2024/7/1", "クールミストプロ", "11", "3,500", "38,500"],
    ["2024/7/2", "サーモラッププロ", "21", "3,800", "79,800"],
    ["2024/7/2", "スムースファブリックケア", "16", "2,300", "36,800"],
    ["2024/7/2", "ライトブラシウルトラ", "8", "6,200", "49,600"],
    ["2024/7/2", "シルキーソフトレザー", "23", "3,200", "73,600"],
    ["2024/7/2", "フレッシュガード360", "12", "2,300", "27,600"],
    ["2024/7/2", "クリーンウェーブソニック", "4", "5,000", "20,000"],
    ["2024/7/2", "フレキシドライタオル", "15", "1,500", "22,500"],
    ["2024/7/3", "ライトブラシウルトラ", "9", "6,200", "55,800"],
    ["2024/7/3", "フレッシュガード360", "20", "2,300", "46,000"],
    ["2024/7/3", "ヒートグリップカップ", "9", "1,800", "16,200"],
    ["2024/7/3", "エコシャインソープ", "3", "850", "2,550"],
    ["2024/7/3", "アクアモップ X3", "23", "4,500", "103,500"],
    ["2024/7/3", "グロースポンジマックス", "15", "450", "6750"],
    ["2024/7/3", "ヒートグリップカップ", "11", "1,800", "19800"]
];

function fill(id, html) {
    document.getElementById(id).insertAdjacentHTML("beforeend", html);
}

fill("table1", "<tr><th>販売日</th><th>製品名</th><th>数量</th><th>単価</th></tr>" +
    rows.map(r => `<tr><td>${r[0]}</td><td class="name">${r[1]}</td><td>${r[2]}</td><td>${r[3]}</td></tr>`).join(""));
fill("table2", "<tr><th>売上</th>" + "<td></td>".repeat(7) + "</tr>" +
    rows.map(r => `<tr><td>${r[4]}</td>` + "<td></td>".repeat(7) + "</tr>").join(""));
fill("table3", "<tr><td></td><td></td></tr>".repeat(22));

for (let i = 1; i <= 22; i++) {
    fill("rowheads", `<div>${i}</div>`);
}

// Rulers: one long tick per centimetre, a short one at each half
const CM = 38;

function drawHorizontal() {
    let out = '<defs><linearGradient id="gh" x2="0" y2="1"><stop stop-color="#93d1ae"/><stop offset="1" stop-color="#e4efe8"/></linearGradient></defs>' +
        '<rect width="795" height="18" fill="#f2f2f2"/><rect x="175" width="285" height="18" fill="url(#gh)"/><path class="tick" d="M0 .5H795"/>';
    for (let i = -1; i <= 19; i++) {
        const x = Math.round(67 + i * 37.75) + 0.5;
        if (i !== 0) {
            out += `<path class="tick" d="M${x} 3V17"/><text class="num" x="${x - 2}" y="11" text-anchor="end">${Math.abs(i)}</text>`;
        }
        out += `<path class="tick" d="M${x - 19} 1V8"/>`;
    }
    fill("hruler", out);
}

function drawVertical() {
    let out = '<defs><linearGradient id="gv"><stop stop-color="#93d1ae"/><stop offset="1" stop-color="#e4efe8"/></linearGradient></defs>' +
        '<rect width="20" height="72" fill="#f2f2f2"/><rect y="72" width="20" height="660" fill="url(#gv)"/><path class="tick" d="M.5 0V720"/>';
    for (let i = -1; i <= 16; i++) {
        const y = Math.round(73 + i * CM) + 0.5;
        if (i !== 0) {
            out += `<path class="tick" d="M1 ${y}H19"/><text class="num" text-anchor="end" transform="translate(10 ${y + 2}) rotate(-90)">${Math.abs(i)}</text>`;
        }
        out += `<path class="tick" d="M1 ${y - 19}H8"/>`;
    }
    fill("vruler", out);
}

drawHorizontal();
drawVertical();
```
